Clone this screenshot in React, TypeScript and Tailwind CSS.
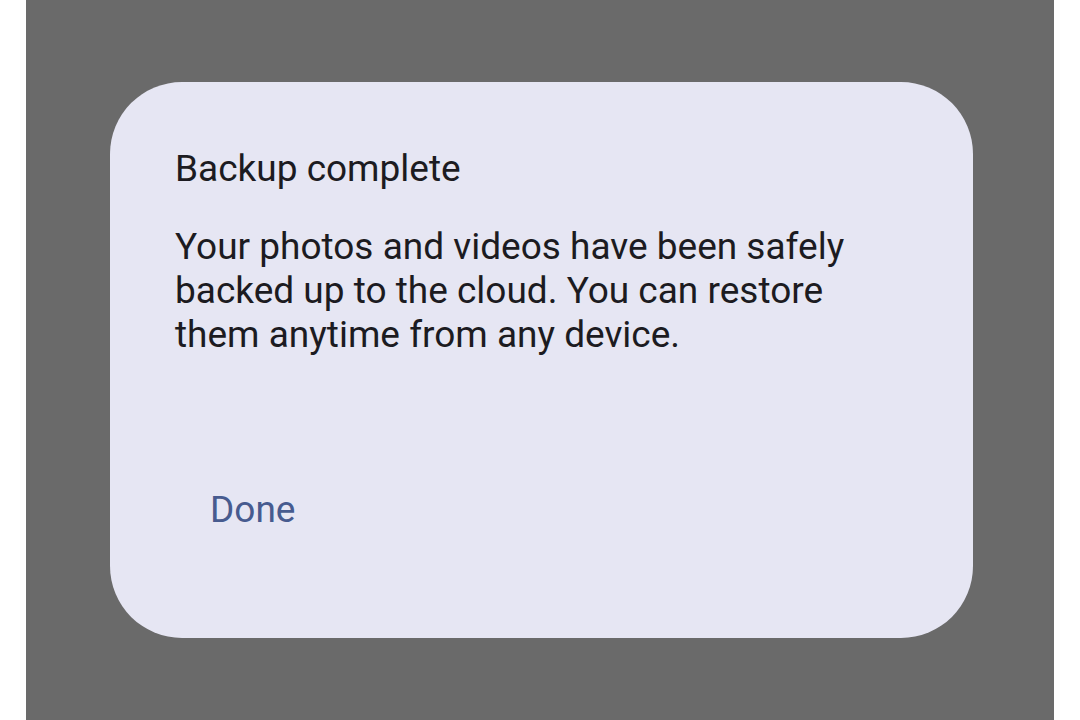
export default function App() {
  return (
    <div className="flex h-[720px] w-[1080px] bg-white px-[26px]" style={{ fontFamily: 'Roboto, "Noto Sans", sans-serif' }}>
      <div className="flex-1 bg-[#6a6a6a] pt-[82px] pl-[84px] pr-[81px]">
        <div className="flex h-[556px] flex-col rounded-[72px] bg-[#e6e6f3] pl-[65px] pr-[98px] text-[#1c1b21]">
          <h2 className="mt-[63px] text-[37px] leading-[48px]">Backup complete</h2>
          <p className="mt-[32px] text-[37px] leading-[44px]">
            Your photos and videos have been safely backed up to the cloud. You can restore them anytime from any device.
          </p>
          <div className="mt-[131px]">
            <button className="ml-[35px] text-[37px] leading-[44px] text-[#475b8f]">Done</button>
          </div>
        </div>
      </div>
    </div>
  );
}
